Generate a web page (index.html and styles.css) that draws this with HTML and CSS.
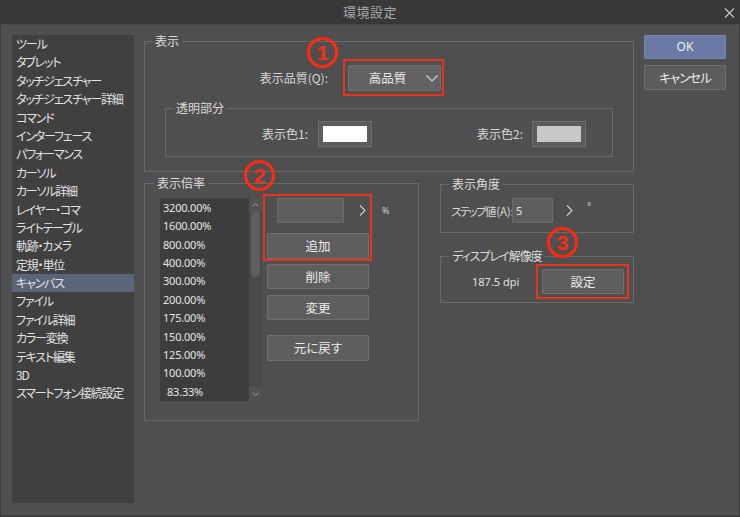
FILE: index.html
```html
<!DOCTYPE html>
<html lang="ja">
<head>
<meta charset="utf-8">
<title>環境設定</title>
<link rel="stylesheet" href="styles.css">
</head>
<body>
<div class="window">
  <header class="titlebar">
    <span class="title">環境設定</span>
    <svg class="close" width="11" height="10" viewBox="0 0 11 10"><path d="M1 0.5 L10 9.5 M10 0.5 L1 9.5" stroke="#c8c8c8" stroke-width="1.1" fill="none"/></svg>
  </header>
  <div class="main">
    <ul class="cats">
      <li>ツール</li>
      <li>タブレット</li>
      <li>タッチジェスチャー</li>
      <li>タッチジェスチャー詳細</li>
      <li>コマンド</li>
      <li>インターフェース</li>
      <li>パフォーマンス</li>
      <li>カーソル</li>
      <li>カーソル詳細</li>
      <li>レイヤー・コマ</li>
      <li>ライトテーブル</li>
      <li>軌跡・カメラ</li>
      <li>定規・単位</li>
      <li class="sel">キャンバス</li>
      <li>ファイル</li>
      <li>ファイル詳細</li>
      <li>カラー変換</li>
      <li>テキスト編集</li>
      <li>3D</li>
      <li>スマートフォン接続設定</li>
    </ul>

    <div class="content">
      <fieldset class="grp grp-display">
        <legend>表示</legend>
        <div class="row-quality">
          <span class="lbl lbl-q">表示品質(Q):</span>
          <span class="mark mark-q">
            <span class="dropdown"><span class="dd-text">高品質</span><svg class="dd-chev" width="12" height="7" viewBox="0 0 12 7"><path d="M0.5 0.5 L6 6 L11.5 0.5" stroke="#d6d6d6" stroke-width="1.2" fill="none"/></svg></span>
          </span>
        </div>
        <fieldset class="grp grp-trans">
          <legend>透明部分</legend>
          <div class="row-colors">
            <span class="lbl lbl-c1">表示色1:</span>
            <span class="swatch"><span class="sw-in sw-white"></span></span>
            <span class="lbl lbl-c2">表示色2:</span>
            <span class="swatch"><span class="sw-in sw-gray"></span></span>
          </div>
        </fieldset>
      </fieldset>

      <div class="lower">
        <fieldset class="grp grp-zoom">
          <legend>表示倍率</legend>
          <div class="zoom-body">
            <div class="zlist">
              <ul class="zl-items">
                <li>3200.00%</li>
                <li>1600.00%</li>
                <li>800.00%</li>
                <li>400.00%</li>
                <li>300.00%</li>
                <li>200.00%</li>
                <li>175.00%</li>
                <li>150.00%</li>
                <li>125.00%</li>
                <li>100.00%</li>
                <li class="ind">83.33%</li>
              </ul>
              <div class="zl-scroll">
                <span class="sb-btn"><svg width="7" height="4" viewBox="0 0 7 4"><path d="M0.5 3.5 L3.5 0.5 L6.5 3.5" stroke="#9a9a9a" fill="none"/></svg></span>
                <span class="sb-thumb"></span>
                <span class="sb-space"></span>
                <span class="sb-btn"><svg width="7" height="4" viewBox="0 0 7 4"><path d="M0.5 0.5 L3.5 3.5 L6.5 0.5" stroke="#9a9a9a" fill="none"/></svg></span>
              </div>
            </div>
            <div class="zctrl">
              <div class="mark mark-add">
                <div class="in-row">
                  <span class="inbox inbox-zoom"></span>
                  <svg class="arr arr-zoom" width="7" height="11" viewBox="0 0 7 11"><path d="M1 0.5 L6 5.5 L1 10.5" stroke="#d0d0d0" stroke-width="1.1" fill="none"/></svg>
                  <span class="unit">%</span>
                </div>
                <button class="btn btn-add">追加</button>
              </div>
              <button class="btn btn-del">削除</button>
              <button class="btn btn-chg">変更</button>
              <button class="btn btn-rst">元に戻す</button>
            </div>
          </div>
        </fieldset>

        <div class="rightcol">
          <fieldset class="grp grp-angle">
            <legend>表示角度</legend>
            <div class="angle-row">
              <span class="lbl lbl-step"><span class="tight">ステップ</span>値(A):</span>
              <span class="inbox inbox-step">5</span>
              <svg class="arr arr-step" width="7" height="11" viewBox="0 0 7 11"><path d="M1 0.5 L6 5.5 L1 10.5" stroke="#d0d0d0" stroke-width="1.1" fill="none"/></svg>
              <span class="deg">°</span>
            </div>
          </fieldset>
          <fieldset class="grp grp-res">
            <legend class="kana">ディスプレイ解像度</legend>
            <div class="res-row">
              <span class="dpi">187.5 dpi</span>
              <span class="mark mark-set"><button class="btn btn-set">設定</button></span>
            </div>
          </fieldset>
        </div>
      </div>
    </div>

    <div class="actions">
      <button class="btn btn-ok">OK</button>
      <button class="btn btn-cancel kana">キャンセル</button>
    </div>
  </div>

  <span class="badge b1">1</span>
  <span class="badge b2">2</span>
  <span class="badge b3">3</span>
</div>
</body>
</html>
```

FILE: styles.css
```css
html, body {
  margin: 0;
  padding: 0;
  background: #4f4f4f;
}

body {
  font-family: "Noto Sans CJK JP", "Noto Sans", sans-serif;
  font-feature-settings: "palt";
  font-size: 12px;
  color: #dedede;
}

.window {
  position: relative;
  width: 740px;
  height: 517px;
  overflow: hidden;
  background: #4f4f4f;
}

.kana {
  letter-spacing: -1px;
}

/* title bar */
.titlebar {
  height: 24px;
  background: #383838;
  display: flex;
  align-items: center;
  justify-content: center;
  position: relative;
}

.title {
  color: #a8a8a8;
  font-size: 13px;
  line-height: 24px;
  letter-spacing: 0.5px;
}

.close {
  position: absolute;
  right: 5px;
  top: 8px;
}

/* main */
.main {
  height: 493px;
  box-sizing: border-box;
  border: 1px solid #3d3d3d;
  border-top-color: #474747;
  border-bottom-width: 2px;
  padding: 10px 13px 0 11px;
  display: flex;
  align-items: flex-start;
  background: #4f4f4f;
}

/* category list */
.cats {
  list-style: none;
  margin: 0 10px 0 0;
  padding: 0;
  width: 122px;
  height: 468px;
  flex: none;
  background: #404040;
  overflow: hidden;
}

.cats li {
  line-height: 18.4px;
  height: 18.4px;
  padding-left: 4px;
  white-space: nowrap;
  color: #e2e2e2;
  font-size: 12px;
  letter-spacing: -1.2px;
}

.cats li.sel {
  background: #5b6478;
}

/* content column */
.content {
  width: 490px;
  flex: none;
  margin-right: 10px;
}

.grp {
  margin: 0;
  padding: 0;
  border: 1px solid #696969;
  min-width: 0;
  box-sizing: border-box;
}

.grp > legend {
  padding: 0 3px;
  margin-left: 7px;
  line-height: 12px;
  height: 12px;
  font-size: 12px;
  color: #dcdcdc;
}

.lbl {
  color: #d8d8d8;
  white-space: nowrap;
  line-height: 14px;
}

.mark {
  border: 2px solid #e8321c;
  box-sizing: border-box;
}

/* display quality */
.row-quality {
  display: flex;
  align-items: center;
  margin-top: 12px;
}

.lbl-q {
  width: 183px;
  text-align: right;
  flex: none;
}

.mark-q {
  margin-left: 15px;
  padding: 4px 1px 3px 3px;
  display: flex;
}

.dropdown {
  width: 93px;
  height: 26px;
  box-sizing: border-box;
  background: #626262;
  border: 1px solid #6e6e6e;
  border-radius: 2px;
  display: flex;
  align-items: center;
}

.dd-text {
  width: 77px;
  text-align: center;
  color: #ececec;
  font-size: 12.5px;
  line-height: 14px;
}

.dd-chev {
  margin-top: 1px;
  flex: none;
}

/* transparency */
.grp-trans {
  margin: 6px 20px 14px 20px;
}

.row-colors {
  display: flex;
  align-items: center;
  margin-top: 7px;
  padding-bottom: 9px;
}

.lbl-c1 {
  width: 142px;
  text-align: right;
}

.lbl-c2 {
  width: 151px;
  text-align: right;
}

.swatch {
  width: 54px;
  height: 26px;
  box-sizing: border-box;
  border: 1px solid #6d6d6d;
  background: #5c5c5c;
  padding: 4px;
  margin-left: 10px;
  display: flex;
}

.lbl-c2 + .swatch {
  margin-left: 9px;
}

.sw-in {
  flex: 1;
}

.sw-white { background: #ffffff; }
.sw-gray { background: #c8c8c8; }

/* lower row */
.lower {
  display: flex;
  align-items: flex-start;
  margin-top: 5px;
}

.grp-zoom {
  width: 275px;
  flex: none;
}

.grp-zoom > legend {
  margin-left: 9px;
}

.zoom-body {
  display: flex;
  align-items: flex-start;
  margin-top: 5px;
  padding-left: 15px;
  padding-bottom: 19px;
}

.zlist {
  width: 102px;
  height: 203px;
  margin-top: 4px;
  background: #3d3d3d;
  display: flex;
  flex: none;
}

.zl-items {
  list-style: none;
  margin: 0;
  padding: 1px 0 0 3px;
  flex: 1;
}

.zl-items li {
  font-family: "Noto Sans", "Noto Sans CJK JP", sans-serif;
  font-size: 11px;
  line-height: 18.37px;
  height: 18.37px;
  color: #e4e4e4;
  letter-spacing: -0.2px;
}

.zl-items li.ind {
  padding-left: 4px;
}

.zl-scroll {
  width: 13px;
  background: #494949;
  display: flex;
  flex-direction: column;
  align-items: center;
}

.sb-btn {
  width: 13px;
  height: 14px;
  background: #525252;
  display: flex;
  align-items: center;
  justify-content: center;
}

.sb-thumb {
  width: 9px;
  height: 65px;
  border-radius: 4px;
  background: #5e5e5e;
}

.sb-space {
  flex: 1;
}

.zctrl {
  width: 109px;
  margin-left: 1px;
  display: flex;
  flex-direction: column;
  align-items: flex-start;
  flex: none;
}

.mark-add {
  width: 109px;
  padding: 2px 0 0 2px;
}

.in-row {
  display: flex;
  align-items: center;
  height: 25px;
  white-space: nowrap;
}

.in-row > * {
  flex: none;
}

.inbox {
  height: 25px;
  box-sizing: border-box;
  background: #5e5e5e;
  border: 1px solid #6c6c6c;
  border-radius: 1px;
  flex: none;
}

.inbox-zoom {
  width: 67px;
  margin-left: 10px;
}

.arr {
  flex: none;
}

.arr-zoom {
  margin-left: 15px;
}

.unit {
  margin-left: 16px;
  font-family: "Noto Sans", sans-serif;
  font-size: 9px;
  color: #d0d0d0;
}

.btn {
  font-family: inherit;
  font-feature-settings: "palt";
  font-size: 12.5px;
  color: #ececec;
  background: #5e5e5e;
  border: 1px solid #6f6f6f;
  border-radius: 1px;
  box-sizing: border-box;
  padding: 0;
  line-height: 14px;
  display: flex;
  align-items: center;
  justify-content: center;
}

.btn-add {
  width: 102px;
  height: 26px;
  margin-top: 10px;
}

.btn-del,
.btn-chg,
.btn-rst {
  width: 102px;
  margin-left: 4px;
}

.btn-del {
  height: 25px;
  margin-top: 3px;
}

.btn-chg {
  height: 25px;
  margin-top: 6px;
}

.btn-rst {
  height: 26px;
  margin-top: 15px;
}

/* right column */
.rightcol {
  width: 194px;
  margin-left: 21px;
  margin-top: 1px;
  flex: none;
}

.grp-angle > legend,
.grp-res > legend {
  margin-left: 8px;
}

.angle-row {
  display: flex;
  align-items: center;
  margin-top: 8px;
  padding: 0 0 9px 10px;
}

.lbl-step {
  width: 61px;
  flex: none;
  font-size: 11.5px;
  letter-spacing: -0.2px;
}

.tight {
  letter-spacing: -1.6px;
}

.inbox-step {
  width: 41px;
  padding-left: 3px;
  line-height: 23px;
  font-family: "Noto Sans", sans-serif;
  font-size: 11px;
  color: #e6e6e6;
}

.arr-step {
  margin-left: 13px;
}

.deg {
  margin-left: 14px;
  margin-top: -9px;
  font-family: "Noto Sans", sans-serif;
  font-size: 10px;
  color: #d0d0d0;
}

.grp-res {
  margin-top: 17px;
}

.res-row {
  display: flex;
  align-items: center;
  margin-top: 2px;
  padding: 0 0 3px 31px;
}

.dpi {
  width: 64px;
  font-family: "Noto Sans", sans-serif;
  font-size: 11px;
  color: #e0e0e0;
  line-height: 14px;
}

.mark-set {
  padding: 3px 3px 3px 4px;
  display: flex;
}

.btn-set {
  width: 82px;
  height: 25px;
}

/* dialog buttons */
.actions {
  width: 82px;
  flex: none;
  display: flex;
  flex-direction: column;
}

.btn-ok {
  height: 24px;
  background: #6a7aa5;
  border-color: #7585ad;
  color: #f0f0f0;
  font-family: "Noto Sans", sans-serif;
  font-size: 12px;
}

.btn-cancel {
  height: 25px;
  margin-top: 6px;
  background: #5c5c5c;
}

/* annotation badges */
.badge {
  position: absolute;
  width: 31px;
  height: 31px;
  box-sizing: border-box;
  border: 3px solid #ff2a12;
  border-radius: 50%;
  color: #ff2a12;
  font-family: "Liberation Sans", "Noto Sans", sans-serif;
  font-weight: bold;
  font-size: 21px;
  line-height: 25px;
  text-align: center;
}

.b1 { left: 307px; top: 37px; }
.b2 { left: 244px; top: 160px; }
.b3 { left: 547px; top: 227px; }
```
